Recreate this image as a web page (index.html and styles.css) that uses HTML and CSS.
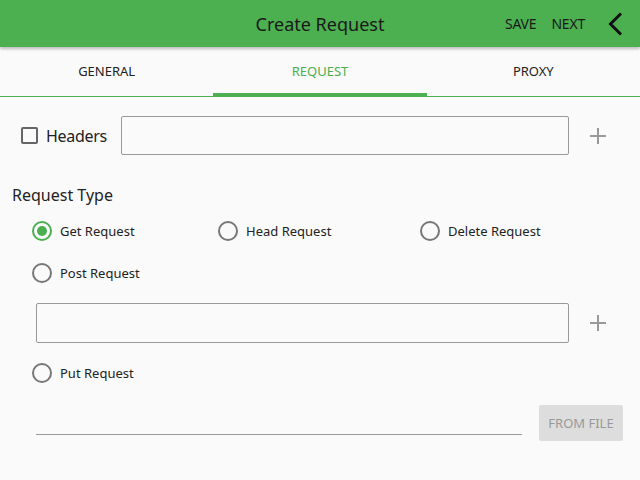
FILE: index.html
```html
<!DOCTYPE html>
<html>
<head>
<meta charset="utf-8">
<link rel="stylesheet" href="styles.css">
</head>
<body>
<header class="appbar">
  <div class="spacer"></div>
  <h1 class="title">Create Request</h1>
  <div class="actions">
    <span class="action">SAVE</span>
    <span class="action">NEXT</span>
    <svg class="back" width="15" height="24" viewBox="0 0 15 24"><path d="M13 1.5 L2.5 12 L13 22.5" fill="none" stroke="#111" stroke-width="3"/></svg>
  </div>
</header>
<nav class="tabs">
  <div class="tab">GENERAL</div>
  <div class="tab active">REQUEST</div>
  <div class="tab">PROXY</div>
</nav>
<main class="content">
  <div class="row headers-row">
    <label class="check-label"><span class="checkbox"></span>Headers</label>
    <div class="textbox headers-box"></div>
    <div class="plus"><svg width="16" height="16" viewBox="0 0 16 16"><path d="M8 0 V16 M0 8 H16" stroke="#999" stroke-width="2"/></svg></div>
  </div>
  <div class="section-title">Request Type</div>
  <div class="radio-grid">
    <div class="radio-item"><span class="radio checked"></span>Get Request</div>
    <div class="radio-item"><span class="radio"></span>Head Request</div>
    <div class="radio-item"><span class="radio"></span>Delete Request</div>
  </div>
  <div class="radio-item post"><span class="radio"></span>Post Request</div>
  <div class="row body-row">
    <div class="textbox body-box"></div>
    <div class="plus"><svg width="16" height="16" viewBox="0 0 16 16"><path d="M8 0 V16 M0 8 H16" stroke="#999" stroke-width="2"/></svg></div>
  </div>
  <div class="radio-item put"><span class="radio"></span>Put Request</div>
  <div class="row file-row">
    <div class="underline"></div>
    <div class="file-btn">FROM FILE</div>
  </div>
</main>
</body>
</html>
```

FILE: styles.css
```css
* { box-sizing: border-box; }
html, body { margin: 0; padding: 0; }
body {
  width: 640px;
  height: 480px;
  background: #fafafa;
  font-family: "Noto Sans", "Open Sans", sans-serif;
  color: #222;
  overflow: hidden;
}
.appbar {
  height: 47px;
  background: #4caf50;
  display: grid;
  grid-template-columns: 1fr auto 1fr;
  align-items: center;
  box-shadow: 0 2px 3px rgba(0,0,0,0.25);
  position: relative;
  z-index: 1;
}
.title {
  margin: 0;
  font-size: 18px;
  font-weight: normal;
  color: #1a1a1a;
}
.actions {
  display: flex;
  justify-content: flex-end;
  align-items: center;
  padding-right: 17px;
}
.action {
  font-size: 14px;
  color: #1a1a1a;
  margin-left: 15px;
  letter-spacing: -0.2px;
}
.back { margin-left: 23px; }
.tabs {
  display: flex;
  height: 50px;
  border-bottom: 1px solid #4caf50;
}
.tab {
  flex: 1;
  display: flex;
  align-items: center;
  justify-content: center;
  font-size: 13px;
  color: #222;
  position: relative;
  padding-bottom: 2px;
}
.tab.active { color: #4caf50; }
.tab.active::after {
  content: "";
  position: absolute;
  left: 0; right: 0; bottom: 0;
  height: 3px;
  background: #4caf50;
}
.content { padding: 19px 0 0 0; }
.row { display: flex; align-items: center; }
.check-label {
  width: 121px;
  padding-left: 21px;
  display: flex;
  align-items: center;
  font-size: 16px;
  letter-spacing: -0.3px;
  color: #222;
}
.checkbox {
  width: 17px; height: 17px;
  border: 2px solid #666;
  border-radius: 2px;
  margin-right: 8px;
}
.textbox {
  border: 1px solid #999;
  border-radius: 2px;
  background: #fafafa;
}
.headers-box { width: 448px; height: 39px; }
.plus {
  flex: 1;
  display: flex;
  justify-content: center;
  padding-right: 13px;
}
.plus svg { display: block; }
.section-title {
  font-size: 16px;
  margin: 29px 0 0 12px;
  color: #222;
}
.radio-grid {
  display: flex;
  margin-top: 15px;
  padding-left: 32px;
}
.radio-item {
  display: flex;
  align-items: center;
  font-size: 13px;
  height: 20px;
  color: #222;
}
.radio-grid .radio-item:nth-child(1) { width: 186px; }
.radio-grid .radio-item:nth-child(2) { width: 202px; }
.radio {
  width: 20px; height: 20px;
  border: 2px solid #777;
  border-radius: 50%;
  margin-right: 8px;
  position: relative;
}
.radio.checked { border-color: #4caf50; }
.radio.checked::after {
  content: "";
  position: absolute;
  left: 3px; top: 3px;
  width: 10px; height: 10px;
  border-radius: 50%;
  background: #4caf50;
}
.post { margin: 22px 0 0 32px; }
.body-row { margin-top: 20px; padding-left: 36px; }
.body-box { width: 533px; height: 40px; }
.put { margin: 20px 0 0 32px; }
.file-row { margin-top: 22px; padding-left: 36px; align-items: flex-end; }
.underline {
  width: 486px;
  border-bottom: 1px solid #999;
  margin-bottom: 6px;
}
.file-btn {
  margin-left: 17px;
  width: 84px;
  height: 36px;
  background: #dddddd;
  border-radius: 2px;
  color: #999;
  font-size: 13px;
  display: flex;
  align-items: center;
  justify-content: center;
}
```
